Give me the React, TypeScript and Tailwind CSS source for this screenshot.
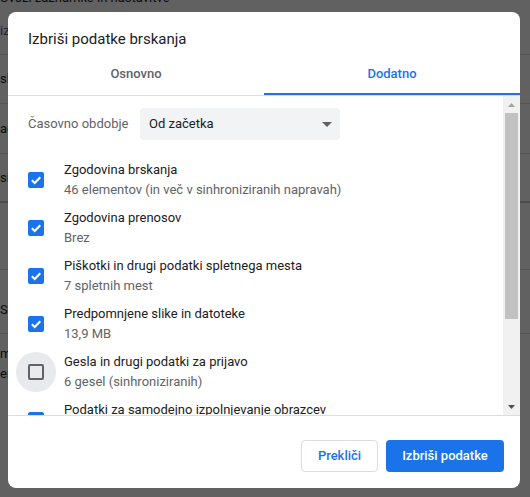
import React from "react";

type Item = { title: string; sub: string; checked: boolean; hover?: boolean };

const items: Item[] = [
    { title: "Zgodovina brskanja", sub: "46 elementov (in več v sinhroniziranih napravah)", checked: true },
    { title: "Zgodovina prenosov", sub: "Brez", checked: true },
    { title: "Piškotki in drugi podatki spletnega mesta", sub: "7 spletnih mest", checked: true },
    { title: "Predpomnjene slike in datoteke", sub: "13,9 MB", checked: true },
    { title: "Gesla in drugi podatki za prijavo", sub: "6 gesel (sinhroniziranih)", checked: false, hover: true },
    { title: "Podatki za samodejno izpolnjevanje obrazcev", sub: "", checked: true },
];

const Checkbox = ({ checked }: { checked: boolean }) =>
    checked ? (
        <div className="h-4 w-4 rounded-[2px] bg-[#1a73e8] flex items-center justify-center">
            <svg width="16" height="16" viewBox="0 0 16 16">
                <path d="M3.8 8.2 L6.7 11 L12.3 5.2" fill="none" stroke="#fff" strokeWidth="2" />
            </svg>
        </div>
    ) : (
        <div className="h-4 w-4 rounded-[2px] border-2 border-[#5f6368]" />
    );

// the settings page sitting behind the scrim
const BackgroundPage = () => (
    <div className="flex flex-col text-[13px] text-[#202124]">
        <div className="h-[40px] -mt-[33px] flex items-end whitespace-nowrap">Uvozi zaznamke in nastavitve</div>
        <div className="h-[48px] border-b border-[#dadce0] flex items-center text-[#7b3fa0]">izbrisano</div>
        <div className="h-[49px] border-b border-[#dadce0] flex items-center">slike</div>
        <div className="h-[50px] border-b border-[#dadce0] flex items-center">ač</div>
        <div className="h-[49px] border-b-2 border-[#c8c8c8] flex items-center">sinhronizacija</div>
        <div className="h-[67px] border-b border-[#dadce0]" />
        <div className="h-[64px] border-b border-[#dadce0] flex items-center pt-[16px]">Spletna mesta</div>
        <div className="h-[60px] flex flex-col justify-center leading-[20px]">
            <span>meni</span>
            <span>enkrat</span>
        </div>
        <div className="h-[62px]" />
        <div className="pl-[28px] leading-[20px] mt-[5px]">Vnesite spletni naslov po meri</div>
    </div>
);

const App = () => {
    return (
        <div className="relative h-[497px] w-[530px] overflow-hidden bg-white font-['Roboto',sans-serif]">
            <BackgroundPage />
            <div className="absolute inset-0 bg-black/[0.62] pl-2 pt-3">
                <div className="w-[512px] h-[476px] rounded-lg bg-white flex flex-col overflow-hidden">
                    <div className="pt-[15px] pl-5 h-[40px] text-[15px] leading-[24px] text-[#202124]">
                        Izbriši podatke brskanja
                    </div>
                    <div className="flex border-b border-[#dadce0] text-[13px] font-medium">
                        <div className="flex-1 h-[43px] flex items-center justify-center text-[#5f6368]">
                            Osnovno
                        </div>
                        <div className="flex-1 h-[43px] flex items-center justify-center text-[#1a73e8] border-b-2 border-[#1a73e8] pt-[2px]">
                            Dodatno
                        </div>
                    </div>
                    <div className="flex h-[320px] border-b border-[#dadce0]">
                        <div className="flex-1 overflow-hidden pt-3 pl-5">
                            <div className="flex items-center h-8">
                                <span className="text-[13px] text-[#5f6368] w-[112px] shrink-0 whitespace-nowrap">
                                    Časovno obdobje
                                </span>
                                <div className="w-[200px] h-8 rounded-[4px] bg-[#f1f3f4] flex items-center justify-between pl-[9px] pr-2 text-[13px] text-[#202124]">
                                    <span>Od začetka</span>
                                    <svg width="10" height="5" viewBox="0 0 10 5">
                                        <path d="M0 0 L10 0 L5 5 Z" fill="#5f6368" />
                                    </svg>
                                </div>
                            </div>
                            <div className="mt-4 flex flex-col">
                                {items.map((it) => (
                                    <div key={it.title} className="h-12 shrink-0 flex items-center">
                                        <div className="w-4 h-4 relative flex items-center justify-center">
                                            {it.hover && (
                                                <div className="absolute -inset-3 rounded-full bg-[#e8eaed]" />
                                            )}
                                            <div className="relative">
                                                <Checkbox checked={it.checked} />
                                            </div>
                                        </div>
                                        <div className="ml-5 flex flex-col text-[13px] leading-[20px]">
                                            <span className="text-[#202124] whitespace-nowrap">{it.title}</span>
                                            <span className="text-[#5f6368] h-5 whitespace-nowrap">{it.sub}</span>
                                        </div>
                                    </div>
                                ))}
                            </div>
                        </div>
                        <div className="w-[17px] bg-[#f1f1f1] flex flex-col items-center">
                            <div className="h-[17px] flex items-center justify-center">
                                <svg width="7" height="4" viewBox="0 0 7 4">
                                    <path d="M0 4 L7 4 L3.5 0 Z" fill="#a3a3a3" />
                                </svg>
                            </div>
                            <div className="w-[13px] h-[206px] bg-[#c1c1c1]" />
                            <div className="flex-1" />
                            <div className="h-[17px] flex items-center justify-center">
                                <svg width="7" height="4" viewBox="0 0 7 4">
                                    <path d="M0 0 L7 0 L3.5 4 Z" fill="#505050" />
                                </svg>
                            </div>
                        </div>
                    </div>
                    <div className="flex justify-end gap-2 pt-6 pr-4">
                        <button className="h-8 w-[77px] rounded-[4px] border border-[#dadce0] bg-white text-[13px] font-medium text-[#1a73e8]">
                            Prekliči
                        </button>
                        <button className="h-8 w-[118px] rounded-[4px] bg-[#1a73e8] text-[13px] font-medium text-white">
                            Izbriši podatke
                        </button>
                    </div>
                </div>
            </div>
        </div>
    );
};

export default App;
